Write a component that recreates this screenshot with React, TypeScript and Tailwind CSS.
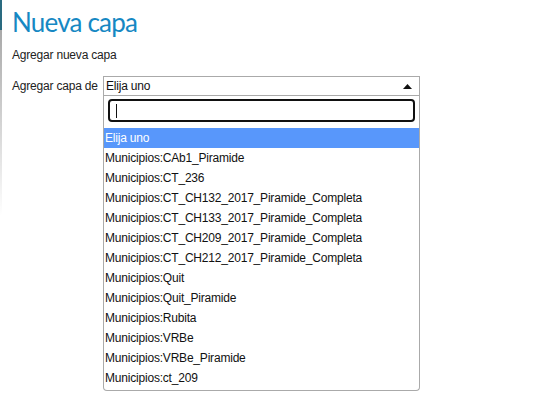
import React from 'react'

const options = [
  'Municipios:CAb1_Piramide',
  'Municipios:CT_236',
  'Municipios:CT_CH132_2017_Piramide_Completa',
  'Municipios:CT_CH133_2017_Piramide_Completa',
  'Municipios:CT_CH209_2017_Piramide_Completa',
  'Municipios:CT_CH212_2017_Piramide_Completa',
  'Municipios:Quit',
  'Municipios:Quit_Piramide',
  'Municipios:Rubita',
  'Municipios:VRBe',
  'Municipios:VRBe_Piramide',
  'Municipios:ct_209',
]

export default function App() {
  return (
    <div className="flex h-[412px] w-[541px] bg-white font-['Liberation_Sans',Arial,sans-serif] text-[12px] tracking-[-0.2px] text-[#222]">
      {/* window edge */}
      <div className="flex w-[2px] flex-col">
        <div className="h-[30px] bg-[#2a6b80]" />
        <div className="h-[185px] bg-gradient-to-b from-[#a9a9a9] to-white" />
      </div>
      <div className="flex flex-1 flex-col pl-[10px]">
        <h1 className="mt-[6px] h-[33px] font-['Lato',sans-serif] text-[26px] leading-[33px] tracking-[-0.8px] text-[#1688c3]">Nueva capa</h1>
        <p className="mt-[9px] leading-[15px]">Agregar nueva capa</p>
        <div className="mt-[13px] flex items-start">
          <label className="w-[91px] pt-[3px] leading-[15px]">Agregar capa de</label>
          <div className="flex w-[317px] flex-col">
            <div className="flex h-[20px] items-center justify-between border border-[#aaa] bg-white pl-[2px] pr-[7px]">
              <span className="leading-[15px] text-[#111]">Elija uno</span>
              <svg width="9" height="5" viewBox="0 0 9 5">
                <path d="M0 5 L4.5 0 L9 5 Z" fill="#111" />
              </svg>
            </div>
            <div className="rounded-b-[4px] border border-t-0 border-[#aaa] bg-white pb-[2px]">
              <div className="px-[4px] pt-[3px] pb-[6px]">
                <div className="flex h-[23px] items-center rounded-[4px] border-2 border-[#111] px-[6px]">
                  <div className="h-[14px] w-px bg-[#111]" />
                </div>
              </div>
              <div className="flex h-[20px] items-center bg-[#5897fb] px-[1px] text-white">Elija uno</div>
              {options.map((o) => (
                <div key={o} className="flex h-[20px] items-center px-[1px] text-[#111]">
                  {o}
                </div>
              ))}
            </div>
          </div>
        </div>
      </div>
    </div>
  )
}
